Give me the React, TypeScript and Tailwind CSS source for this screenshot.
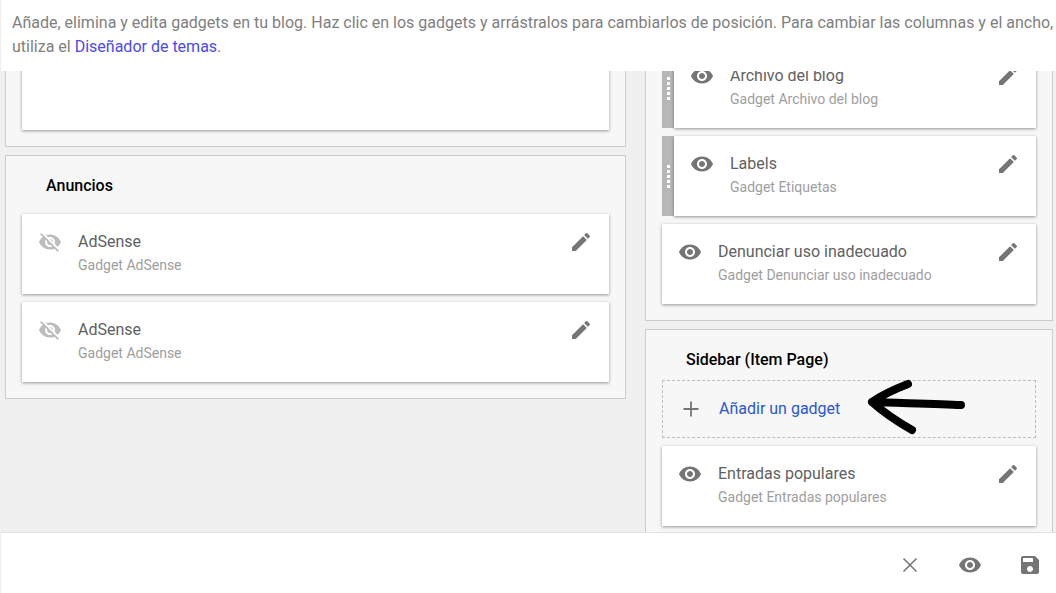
const EYE = "M12 4.5C7 4.5 2.73 7.61 1 12c1.73 4.39 6 7.5 11 7.5s9.27-3.11 11-7.5c-1.73-4.39-6-7.5-11-7.5zM12 17c-2.76 0-5-2.24-5-5s2.24-5 5-5 5 2.24 5 5-2.24 5-5 5zm0-8c-1.66 0-3 1.34-3 3s1.34 3 3 3 3-1.34 3-3-1.34-3-3-3z";
const EYE_OFF = "M12 7c2.76 0 5 2.24 5 5 0 .65-.13 1.26-.36 1.83l2.92 2.92c1.51-1.26 2.7-2.89 3.43-4.75-1.73-4.39-6-7.5-11-7.5-1.4 0-2.74.25-3.98.7l2.16 2.16C10.74 7.13 11.35 7 12 7zM2 4.27l2.28 2.28.46.46C3.08 8.3 1.78 10.02 1 12c1.73 4.39 6 7.5 11 7.5 1.55 0 3.03-.3 4.38-.84l.42.42L19.73 22 21 20.73 3.27 3 2 4.27zM7.53 9.8l1.55 1.55c-.05.21-.08.43-.08.65 0 1.66 1.34 3 3 3 .22 0 .44-.03.65-.08l1.55 1.55c-.67.33-1.41.53-2.2.53-2.76 0-5-2.24-5-5 0-.79.2-1.53.53-2.2zm4.31-.78l3.15 3.15.02-.16c0-1.66-1.34-3-3-3l-.17.01z";
const PENCIL = "M3 17.25V21h3.75L17.81 9.94l-3.75-3.75L3 17.25zM20.71 7.04c.39-.39.39-1.02 0-1.41l-2.34-2.34c-.39-.39-1.02-.39-1.41 0l-1.83 1.83 3.75 3.75 1.83-1.83z";
const SAVE = "M17 3H5c-1.11 0-2 .9-2 2v14c0 1.1.89 2 2 2h14c1.1 0 2-.9 2-2V7l-4-4zm-5 16c-1.66 0-3-1.34-3-3s1.34-3 3-3 3 1.34 3 3-1.34 3-3 3zm3-10H5V5h10v4z";

function Icon({ d, className }: { d: string; className: string }) {
  return (
    <svg viewBox="0 0 24 24" className={className} fill="currentColor">
      <path d={d} />
    </svg>
  );
}

function Card({ title, sub, off, handle }: { title: string; sub: string; off?: boolean; handle?: boolean }) {
  return (
    <div className="flex h-20 shrink-0">
      {handle && (
        <div className="w-3 shrink-0 bg-[#b7b7b7] flex items-center justify-center">
          <div className="w-[3px] h-[23px] bg-[repeating-linear-gradient(to_bottom,#ffffff_0,#ffffff_3px,transparent_3px,transparent_5px)]" />
        </div>
      )}
      <div className="flex-1 flex bg-white p-4 shadow-[0_1px_3px_rgba(0,0,0,0.4)] min-w-0">
        <Icon d={off ? EYE_OFF : EYE} className={off ? "w-6 h-6 shrink-0 text-[#bdbdbd]" : "w-6 h-6 shrink-0 text-[#757575]"} />
        <div className="ml-4 flex-1 min-w-0">
          <div className="text-base leading-6 text-[#616161]">{title}</div>
          <div className="-mt-px text-sm leading-6 text-[#9e9e9e]">{sub}</div>
        </div>
        <Icon d={PENCIL} className="w-6 h-6 shrink-0 text-[#757575]" />
      </div>
    </div>
  );
}

function Title({ children, tight }: { children: React.ReactNode; tight?: boolean }) {
  return (
    <div className={tight ? "pl-6 pt-[18px] pb-[8px] text-base leading-6 font-medium text-black" : "pl-6 pt-[18px] pb-[16px] text-base leading-6 font-medium text-black"}>
      {children}
    </div>
  );
}

export default function App() {
  return (
    <div className="relative flex flex-col h-[593px] w-[1056px] overflow-hidden bg-[#f0f0f0] font-['Roboto',sans-serif] pl-px">
      <header className="relative z-10 h-[71px] shrink-0 bg-white pl-[11px] pt-[11px] text-base leading-6 text-[#808080]">
        Añade, elimina y edita gadgets en tu blog. Haz clic en los gadgets y arrástralos para cambiarlos de posición. Para cambiar las columnas y el ancho, utiliza el <span className="text-[#4a4aee]">Diseñador de temas</span>.
      </header>
      <main className="flex-1 min-h-0 overflow-hidden">
        <div className="flex -mt-[40px] pl-1 gap-[19px]">
          <div className="w-[621px] shrink-0 flex flex-col gap-2">
            <section className="h-[116px] border border-[#cccccc] bg-[#f7f7f7] px-4 pb-4">
              <div className="h-full bg-white shadow-[0_1px_3px_rgba(0,0,0,0.4)]" />
            </section>
            <section className="border border-[#cccccc] bg-[#f7f7f7] px-4 pb-4">
              <Title>Anuncios</Title>
              <div className="flex flex-col gap-2">
                <Card title="AdSense" sub="Gadget AdSense" off />
                <Card title="AdSense" sub="Gadget AdSense" off />
              </div>
            </section>
          </div>
          <div className="w-[408px] shrink-0 flex flex-col gap-2">
            <section className="border border-[#cccccc] bg-[#f7f7f7] px-4 pt-4 pb-4">
              <div className="flex flex-col gap-2">
                <Card title="Archivo del blog" sub="Gadget Archivo del blog" handle />
                <Card title="Labels" sub="Gadget Etiquetas" handle />
                <Card title="Denunciar uso inadecuado" sub="Gadget Denunciar uso inadecuado" />
              </div>
            </section>
            <section className="border border-[#cccccc] bg-[#f7f7f7] px-4 pb-4">
              <Title tight>Sidebar (Item Page)</Title>
              <div className="h-[58px] border border-dashed border-[#bdbdbd] flex items-center pl-[16px]">
                <svg viewBox="0 0 24 24" className="w-6 h-6 shrink-0 text-[#757575]" fill="none" stroke="currentColor" strokeWidth="1.8">
                  <path d="M4.5 12h15M12 4.5v15" />
                </svg>
                <span className="ml-4 text-base text-[#2a56d0]">Añadir un gadget</span>
              </div>
              <div className="mt-2">
                <Card title="Entradas populares" sub="Gadget Entradas populares" />
              </div>
            </section>
          </div>
        </div>
      </main>
      <footer className="relative z-10 h-[61px] shrink-0 bg-white border-t border-[#e0e0e0] flex items-center justify-end gap-9 pr-[14px] pt-1">
        <svg viewBox="0 0 24 24" className="w-6 h-6 text-[#757575]" fill="none" stroke="currentColor" strokeWidth="1.5">
          <path d="M5.5 5.5l13 13M18.5 5.5l-13 13" />
        </svg>
        <Icon d={EYE} className="w-6 h-6 text-[#757575]" />
        <Icon d={SAVE} className="w-6 h-6 text-[#757575]" />
      </footer>
      <svg className="absolute left-[860px] top-[375px] z-20 w-[110px] h-[66px]" viewBox="0 0 110 66" fill="none" stroke="#000" strokeWidth="8" strokeLinecap="round" strokeLinejoin="round">
        <path d="M101 30C80 29 40 28 12 27M48 9C35 14 22 20 12 27C22 36 38 47 52 55" />
      </svg>
    </div>
  );
}
